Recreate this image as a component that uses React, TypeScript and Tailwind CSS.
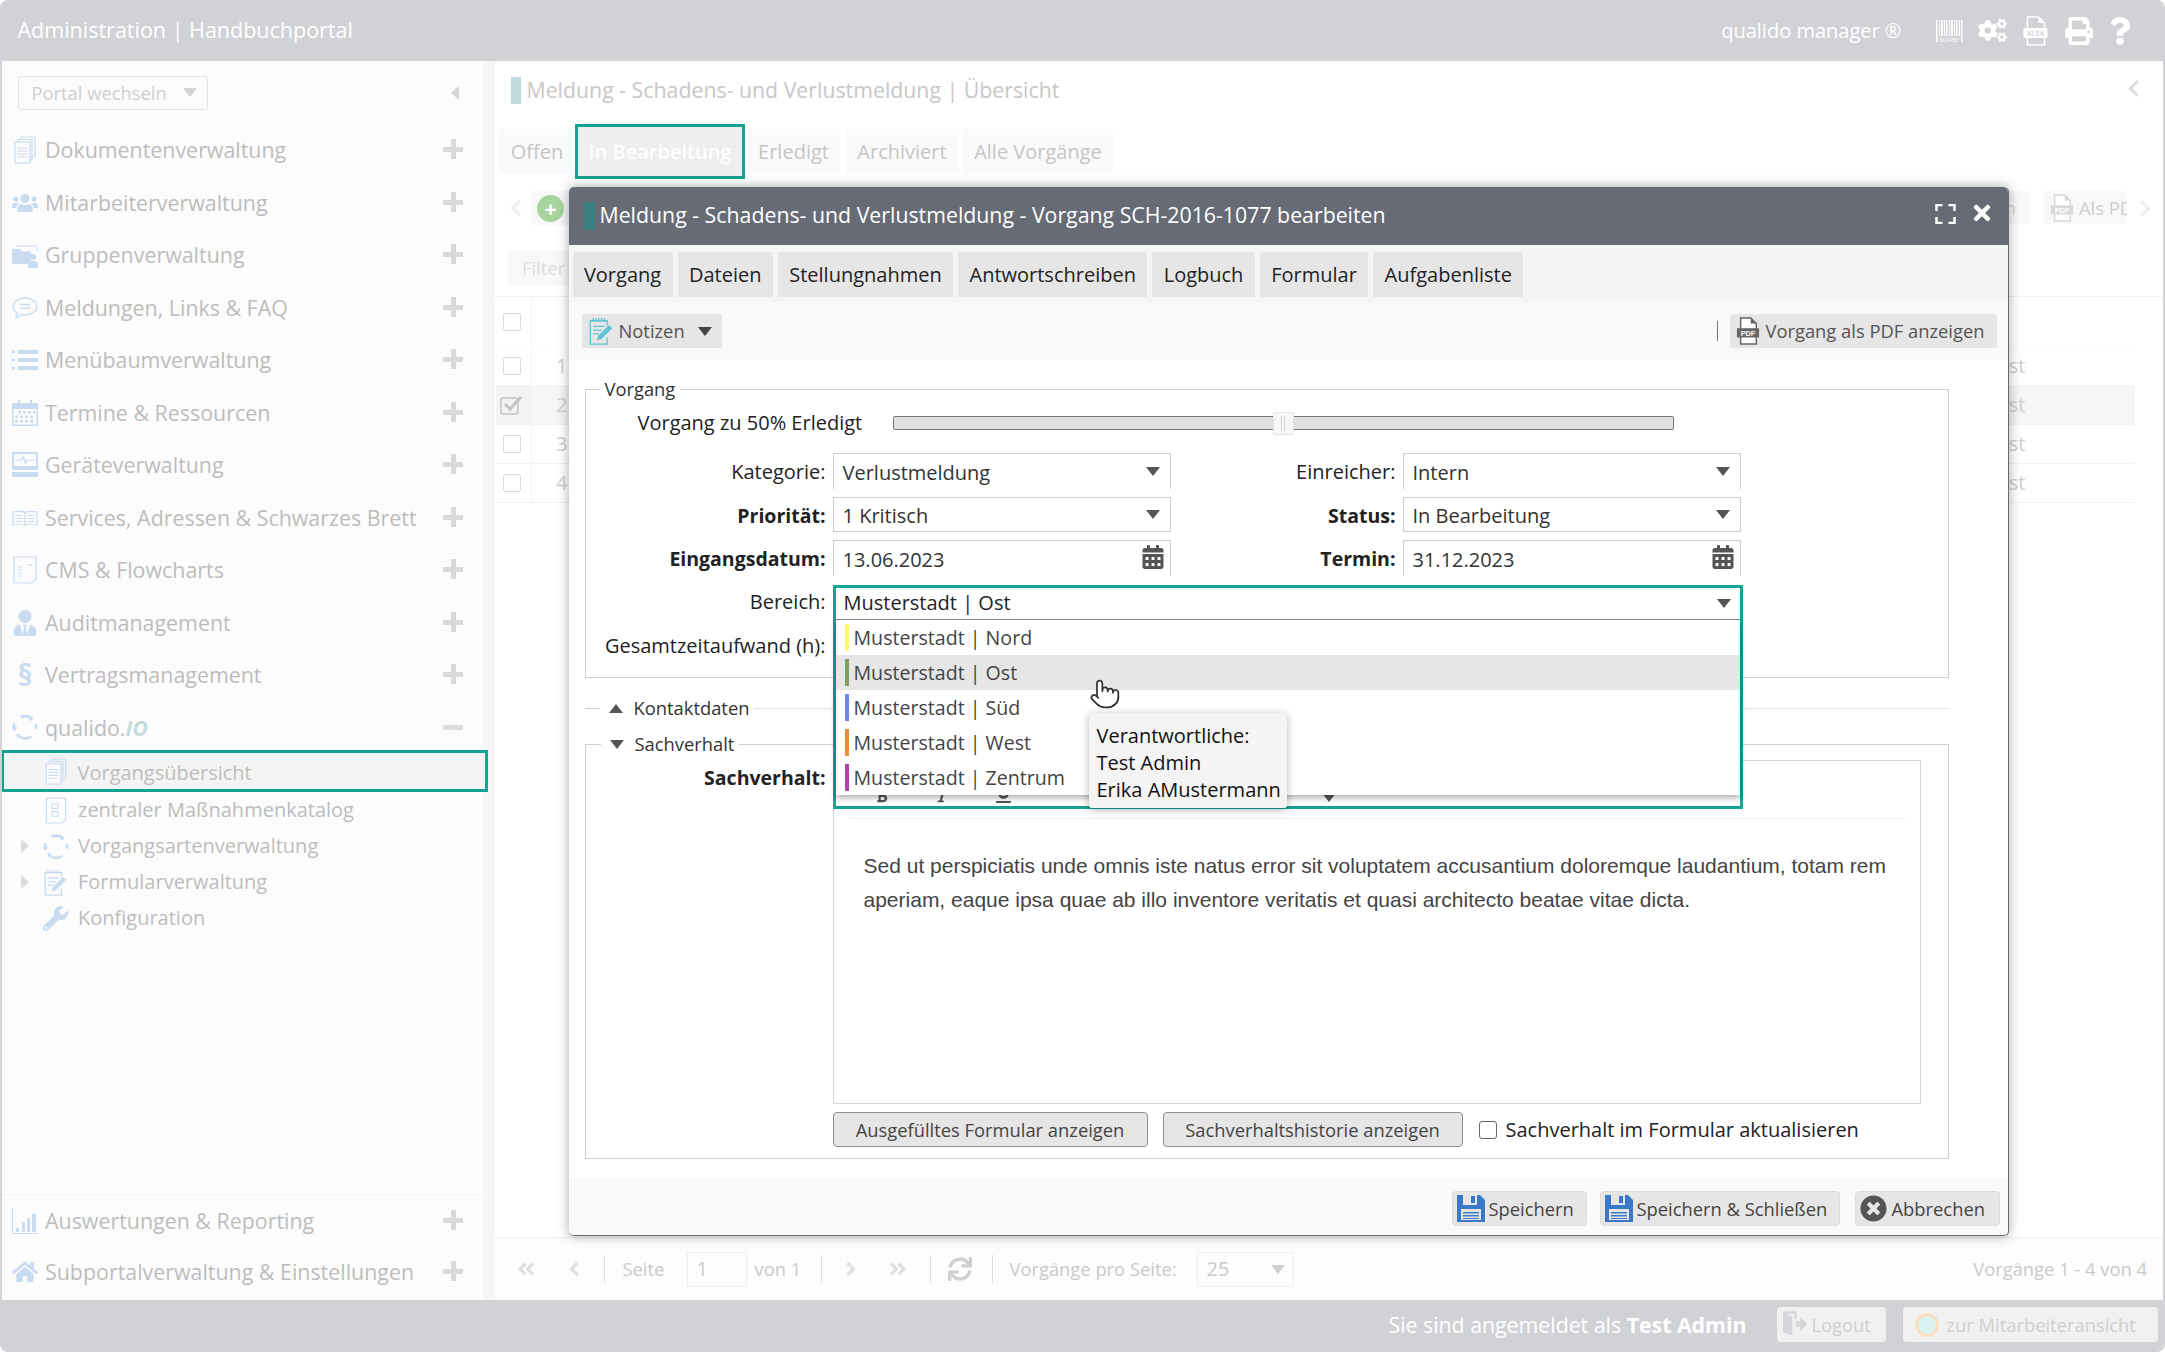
import type { ReactNode } from "react"
import { Pointer } from "lucide-react"
import {
  FaAlignLeft,
  FaAngleDoubleLeft,
  FaAngleDoubleRight,
  FaAngleLeft,
  FaAngleRight,
  FaBold,
  FaCalendarAlt,
  FaChevronLeft,
  FaChevronRight,
  FaCogs,
  FaHome,
  FaItalic,
  FaPrint,
  FaQuestion,
  FaSync,
  FaTimes,
  FaTimesCircle,
  FaUnderline,
  FaUsers,
  FaUserTie,
  FaWrench
} from "react-icons/fa"

const blue = "#c9dbf0"

function TriDown({ c = "border-t-[#555]" }: { c?: string }) {
  return <span className={`block h-0 w-0 flex-none border-x-[7px] border-t-[9px] border-x-transparent ${c}`} />
}

function DocsIcon({ c = blue }: { c?: string }) {
  return (
    <svg viewBox="0 0 22 28" className="h-full w-full" fill="none" stroke={c} strokeWidth="1.2">
      <path d="M7 3V1h14v20h-2" />
      <path d="M4 6V3.500h14V24h-2" />
      <rect x="1" y="6" width="15" height="21" fill="#fdfdfd" />
      <path d="M3.500 12h10M3.500 15h10M3.500 18h10M3.500 21h10" />
    </svg>
  )
}

function FolderIcon() {
  return (
    <svg viewBox="0 0 26 26" className="h-full w-full" fill={blue}>
      <path d="M0 7h8l2 2.500h9V22H0z" />
      <path d="M4 4h21v5" fill="none" stroke={blue} strokeWidth="1" />
      <circle cx="21" cy="15" r="3" />
      <path d="M16 26v-4q0-3 5-3t5 3v4z" />
    </svg>
  )
}

function ChatIcon() {
  return (
    <svg viewBox="0 0 26 24" className="h-full w-full" fill="none" stroke={blue} strokeWidth="1.3">
      <path d="M13 2c6.600 0 12 3.600 12 8.500S19.600 19 13 19c-1.300 0-2.500-.1-3.600-.4L4 22l1.300-5C2.700 15.500 1 13.200 1 10.500 1 5.600 6.400 2 13 2z" />
      <path d="M8 8.500h10M8 12h10" />
    </svg>
  )
}

function ListIcon() {
  return (
    <svg viewBox="0 0 26 22" className="h-full w-full" fill={blue}>
      <path d="M0 1l4 2-4 2zM0 9l4 2-4 2zM0 17l4 2-4 2z" />
      <path d="M6 1h20v4H6zM6 9h20v4H6zM6 17h20v4H6z" />
    </svg>
  )
}

function CalIcon() {
  return (
    <svg viewBox="0 0 26 26" className="h-full w-full" fill={blue}>
      <path d="M0 3h26v23H0zm1.500 6v15.500h23V9z" fillRule="evenodd" />
      <path d="M6 0h2v6H6zM18 0h2v6h-2z" />
      <path d="M6 11h3v2.500H6zM11 11h3v2.500h-3zM16 11h3v2.500h-3zM21 11h2.500v2.500H21zM3 15.500h3V18H3zM8 15.500h3V18H8zM13 15.500h3V18h-3zM18 15.500h3V18h-3zM3 20h3v2.500H3zM8 20h3v2.500H8zM13 20h3v2.500h-3zM18 20h3v2.500h-3z" />
    </svg>
  )
}

function DeviceIcon() {
  return (
    <svg viewBox="0 0 26 26" className="h-full w-full" fill={blue}>
      <path d="M0 0h26v18H0zm2 2v12h22V2z" fillRule="evenodd" />
      <path d="M3 8h7l1.500-3.500 2 7 1.500-3.500h8" fill="none" stroke={blue} strokeWidth="1.200" />
      <path d="M0 20h26v5H0z" />
    </svg>
  )
}

function BookIcon() {
  return (
    <svg viewBox="0 0 26 16" className="h-full w-full" fill="none" stroke={blue} strokeWidth="1.200">
      <path d="M13 2.500C10 1 4 1 1 2v13c3-1 9-1 12 0 3-1 9-1 12 0V2c-3-1-9-1-12 .5zM13 2.500V15" />
      <path d="M3.500 5.500h7M3.500 8.500h7M3.500 11.500h7M15.500 5.500h7M15.500 8.500h7M15.500 11.500h7" />
    </svg>
  )
}

function CmsIcon() {
  return (
    <svg viewBox="0 0 24 28" className="h-full w-full" fill="none" stroke={blue} strokeWidth="1.200">
      <path d="M1 1h22v22l-4 4H1z" />
      <path d="M5 11h4M5 14h4M5 17h3M5 20h3M14 9h5" />
    </svg>
  )
}

function CycleIcon({ c = blue }: { c?: string }) {
  return (
    <svg viewBox="0 0 24 24" className="h-full w-full" fill="none" stroke={c} strokeWidth="2.400">
      <path d="M8 3A10 10 0 0 1 18 4" />
      <path d="M22 9.500a10 10 0 0 1 0 4.500" />
      <path d="M18 20.500a10 10 0 0 1-11 .5" />
      <path d="M2.200 15a10 10 0 0 1 0-6" />
      <path d="M16 1.500l4 2.500-3 3zM5 22.500l-1-4 4 0zM0 12h5l-2.500 3.500z" fill={c} stroke="none" />
    </svg>
  )
}

function ChartIcon() {
  return (
    <svg viewBox="0 0 26 26" className="h-full w-full" fill={blue}>
      <path d="M0 0h1v25h26v1H0z" />
      <path d="M4 20h3v4H4zM10 14h3v10h-3zM15 10h3v14h-3zM20 6h4v18h-4z" />
    </svg>
  )
}

function ChecklistIcon() {
  return (
    <svg viewBox="0 0 22 28" className="h-full w-full" fill="none" stroke={blue} strokeWidth="1.200">
      <path d="M1 1h20v22l-4 4H1z" />
      <path d="M7 7h6v5H7zM7 15h6v5H7z" />
    </svg>
  )
}

function NoteIcon({ c = blue }: { c?: string }) {
  return (
    <svg viewBox="0 0 28 30" className="h-full w-full" fill="none" stroke={c} strokeWidth="1.400">
      <path d="M20 9V4H2v25h18v-7" />
      <path d="M5 1v4M8 1v4M11 1v4M14 1v4M17 1v4" />
      <path d="M5 10h12M5 14h9M5 18h6" />
      <path d="M9 25l1.500-5L22 8.500l3.500 3.500L14 23.500z" fill={c} stroke="none" />
    </svg>
  )
}

function FileIcon({ c = "#666", label = "PDF", ink = "#fff", page = "#fff" }: { c?: string; label?: string; ink?: string; page?: string }) {
  return (
    <svg viewBox="0 0 26 30" className="h-full w-full">
      <path d="M5 1h11l6 6v22H5z" fill={page} stroke={c} strokeWidth="1.600" />
      <path d="M16 1v6h6" fill={c} />
      <rect x="1" y="12" width="24" height="10" fill={c} />
      <text x="13" y="20" fontSize={label.length > 3 ? "6.500" : "8"} fontFamily="Liberation Sans" fontWeight="700" textAnchor="middle" fill={ink}>
        {label}
      </text>
    </svg>
  )
}

function BarcodeIcon() {
  return (
    <svg viewBox="0 0 28 22" className="h-full w-full" fill="#fff">
      <path d="M0 0h1.500v22H0zM3 0h1v16H3zM5 0h2v16H5zM8 0h1v16H8zM10 0h1.500v16H10zM13 0h1v16h-1zM15 0h2v16h-2zM18 0h1v16h-1zM20 0h1.500v16H20zM23 0h1v16h-1zM25 0h1.500v22H25z" />
      <text x="13.500" y="21.500" fontSize="4.500" fontFamily="Liberation Sans" textAnchor="middle">
        01234567
      </text>
    </svg>
  )
}

function SaveIcon() {
  return (
    <svg viewBox="0 0 28 27" className="h-full w-full" fill="#3b78c8">
      <path d="M0 0h6v10h14V0h3l5 5v22H0zM4 14v11h20V14z" fillRule="evenodd" />
      <path d="M14 1h4v7h-4zM6 17h16v1.500H6zM6 20h16v1.500H6zM6 23h16v1H6z" />
    </svg>
  )
}

function ExpandIcon() {
  return (
    <svg viewBox="0 0 20 20" className="h-full w-full" fill="none" stroke="#fff" strokeWidth="2.500">
      <path d="M1 7V1h6M13 1h6v6M19 13v6h-6M7 19H1v-6" />
    </svg>
  )
}

function DoorIcon() {
  return (
    <svg viewBox="0 0 26 30" className="h-full w-full" fill="#d5d6d9">
      <path d="M0 0h15v8h-3V3H4l6 3v20l-10-3z" />
      <path d="M14 11h5V6l7 8-7 8v-5h-5z" />
    </svg>
  )
}

function CheckMark() {
  return (
    <svg viewBox="0 0 24 20" className="h-[20px] w-[24px]" fill="none" stroke="#c4c4c4">
      <rect x="1" y="3" width="17" height="16" rx="2.500" strokeWidth="1.500" />
      <path d="M5 9l5 5L21 2" strokeWidth="3" />
    </svg>
  )
}

function MenuRow({ icon, label }: { icon: ReactNode; label: ReactNode }) {
  return (
    <div className="flex h-[52.500px] items-center pr-[20px] pl-[10px]">
      <span className="flex h-[28px] w-[26px] items-center justify-center text-[#c9dbf0]">{icon}</span>
      <span className="ml-[7px] flex-1 text-[21.400px] whitespace-nowrap text-[#bdbcbc]">{label}</span>
      <span className="relative -top-[1px] block h-[20px] w-[20px]">
        <span className="absolute top-[8px] left-0 h-[5px] w-[20px] bg-[#d9d9d9]" />
        <span className="absolute top-0 left-[8px] h-[20px] w-[5px] bg-[#d9d9d9]" />
      </span>
    </div>
  )
}

function SubRow({ icon, label, arrow }: { icon: ReactNode; label: string; arrow?: boolean }) {
  return (
    <div className="flex h-[36px] items-center pl-[18.500px]">
      <span className="flex w-[22px]">
        {arrow && <span className="block h-0 w-0 border-y-[7px] border-l-[8px] border-y-transparent border-l-[#dcdcdc]" />}
      </span>
      <span className="flex h-[27px] w-[26px] items-center justify-center text-[#c9dbf0]">{icon}</span>
      <span className="ml-[9.500px] text-[20px] text-[#bdbcbc]">{label}</span>
    </div>
  )
}

function Select({ value, bottom = true }: { value: string; bottom?: boolean }) {
  return (
    <div className={`flex items-center justify-between border-x border-t border-[#cfcfcf] pr-[10px] pl-[9px] ${bottom ? "h-[35px] border-b" : "h-[36px]"}`}>
      <span className="pt-[2px] text-[20px] text-[#333]">{value}</span>
      <TriDown />
    </div>
  )
}

function DateField({ value }: { value: string }) {
  return (
    <div className="flex h-[36px] items-center justify-between border-x border-t border-[#cfcfcf] pr-[5px] pl-[9px]">
      <span className="pt-[2px] text-[20px] text-[#333]">{value}</span>
      <FaCalendarAlt size={24} className="-mt-[3px] text-[#555]" />
    </div>
  )
}

function Label({ children, w, bold }: { children: ReactNode; w?: string; bold?: boolean }) {
  return <div className={`pr-[7px] text-right whitespace-nowrap text-[#222] ${w ?? ""} ${bold ? "text-[19.500px] font-bold" : "text-[20px]"}`}>{children}</div>
}

function BgBtn({ children, cls }: { children: ReactNode; cls: string }) {
  return <div className={`flex h-[45px] items-center justify-center bg-[#fafafa] text-[20px] text-[#c5c5c5] ${cls}`}>{children}</div>
}

function TableRow({ n, on }: { n: number; on?: boolean }) {
  return (
    <div className={`flex h-[39px] items-center border-b border-[#f3f3f3] ${on ? "bg-[#f6f6f6]" : ""}`}>
      <div className={`flex h-full w-[36px] items-center justify-center border-r border-[#f3f3f3] pr-[3px] ${on ? "bg-[#f3f3f3]" : ""}`}>
        {on ? <CheckMark /> : <span className="h-[18px] w-[18px] rounded-[3px] border border-[#d8d8d8]" />}
      </div>
      <span className="ml-[24px] flex-1 text-[20px] text-[#cfcfcf]">{n}</span>
      <span className="mr-[109px] text-[20px] text-[#cfcfcf]">Ost</span>
    </div>
  )
}

function FootBtn({ icon, label, cls }: { icon: ReactNode; label: string; cls: string }) {
  return (
    <div className={`flex h-[35px] items-center rounded-[4px] border border-[#dcdcdc] bg-[#e6e6e6] pl-[4px] ${cls}`}>
      <span className="flex h-[27px] w-[28px] items-center justify-center">{icon}</span>
      <span className="ml-[4px] text-[18.350px] text-[#444]">{label}</span>
    </div>
  )
}

function Sep() {
  return <span className="block h-[28px] w-px flex-none bg-[#dddddd]" />
}

const areas = [
  { name: "Nord", color: "bg-[#fbf77a]" },
  { name: "Ost", color: "bg-[#7f9f5f]", on: true },
  { name: "Süd", color: "bg-[#6d86f2]" },
  { name: "West", color: "bg-[#ef8a35]" },
  { name: "Zentrum", color: "bg-[#b43fae]" }
]

function Modal() {
  return (
    <div className="absolute top-[187px] left-[566.500px] z-10 flex h-[1049px] w-[1440px] flex-col rounded-[5px] border-r border-b border-[#666b75] bg-white shadow-[0_0_12px_rgba(0,0,0,0.35)]">
      <div className="flex h-[58px] items-center rounded-t-[5px] bg-[#666b75] pl-[15px]">
        <span className="h-[28px] w-[11px] bg-[#3b7f7e]" />
        <span className="ml-[5px] -mt-[3px] flex-1 text-[21.300px] text-white">Meldung - Schadens- und Verlustmeldung - Vorgang SCH-2016-1077 bearbeiten</span>
        <span className="-mt-[5px] h-[20px] w-[21px]"><ExpandIcon /></span>
        <FaTimes size={24} className="mr-[14px] ml-[14px] -mt-[6px] text-white" />
      </div>
      <div className="flex h-[57px] gap-[5px] bg-[#f5f5f5] pt-[7px] pl-[4px]">
        {["Vorgang", "Dateien", "Stellungnahmen", "Antwortschreiben", "Logbuch", "Formular", "Aufgabenliste"].map((t) => (
          <div key={t} className="flex h-[45px] items-center rounded-t-[3px] bg-[#e6e6e6] px-[11.400px] text-[20px] text-[#222]">{t}</div>
        ))}
      </div>
      <div className="flex h-[58px] items-start bg-[#f9f9f9] pt-[12px] pr-[11px] pl-[13px]">
        <div className="flex h-[34px] w-[140px] items-center rounded-t-[3px] border border-[#e0e0e0] bg-[#e6e6e6] pl-[5px]">
          <span className="h-[28px] w-[27px]"><NoteIcon c="#5cc4d3" /></span>
          <span className="ml-[4px] text-[18.350px] text-[#555]">Notizen</span>
          <span className="ml-[13px]"><TriDown c="border-t-[#444]" /></span>
        </div>
        <div className="flex-1" />
        <span className="mt-[7px] h-[20px] w-px bg-[#777]" />
        <div className="ml-[12px] flex h-[34px] w-[267px] items-center rounded-t-[3px] bg-[#e6e6e6] pl-[6px]">
          <span className="h-[28px] w-[24px]"><FileIcon /></span>
          <span className="ml-[6px] text-[18.350px] text-[#555]">Vorgang als PDF anzeigen</span>
        </div>
      </div>

      <div className="relative flex-1 px-[16px] pt-[29px]">
        {/* Vorgang fieldset */}
        <div className="h-[289px] w-[1364px] border border-[#cfcfcf]">
          <div className="-mt-[15px] ml-[14px] w-fit bg-white px-[5px] text-[18.350px] leading-[28px] text-[#333]">Vorgang</div>
          <div className="mt-[7px] flex h-[26px] items-center">
            <span className="ml-[52px] w-[255px] text-[20px] text-[#222]">Vorgang zu 50% Erledigt</span>
            <div className="relative h-[14px] w-[781px] rounded-[2px] border border-[#777] bg-[#e0e0e0]">
              <span className="absolute -top-[5px] left-[379px] flex h-[23px] w-[21px] justify-center gap-[2px] rounded-[2px] border border-[#e4e4e4] bg-[#f7f7f7] pt-[3px] pb-[3px]">
                <i className="block w-px bg-[#d0d0d0]" />
                <i className="block w-px bg-[#d0d0d0]" />
              </span>
            </div>
          </div>
          <div className="mt-[17px] grid grid-cols-[247px_338px_232px_338px] items-center">
            <div className="pt-[2px]"><Label>Kategorie:</Label></div>
            <Select value="Verlustmeldung" bottom={false} />
            <div className="pt-[2px]"><Label>Einreicher:</Label></div>
            <Select value="Intern" bottom={false} />
          </div>
          <div className="mt-[8px] grid grid-cols-[247px_338px_232px_338px] items-center">
            <div className="pt-[2px]"><Label bold>Priorität:</Label></div>
            <Select value="1 Kritisch" />
            <div className="pt-[2px]"><Label bold>Status:</Label></div>
            <Select value="In Bearbeitung" />
          </div>
          <div className="mt-[8px] grid grid-cols-[247px_338px_232px_338px] items-center">
            <div className="pt-[2px]"><Label bold>Eingangsdatum:</Label></div>
            <DateField value="13.06.2023" />
            <div className="pt-[2px]"><Label bold>Termin:</Label></div>
            <DateField value="31.12.2023" />
          </div>
          <div className="mt-[9px] flex h-[36px] items-center pb-[2px]">
            <Label w="w-[247px]">Bereich:</Label>
          </div>
          <div className="mt-[7px] flex h-[36px] items-center">
            <Label w="w-[247px]">Gesamtzeitaufwand (h):</Label>
          </div>
        </div>

        {/* collapsible sections */}
        <div className="mt-[17px] flex h-[26px] w-[1364px] items-center">
          <span className="h-px w-[15px] bg-[#cfcfcf]" />
          <span className="ml-[9px] block h-0 w-0 border-x-[7px] border-b-[9px] border-x-transparent border-b-[#555]" />
          <span className="ml-[11px] text-[18.350px] text-[#333]">Kontaktdaten</span>
          <span className="ml-[5px] h-px flex-1 bg-[#e0e0e0]" />
        </div>
        <div className="relative mt-[23px] h-[415px] w-[1364px] border-x border-b border-[#cfcfcf]">
          <div className="absolute -top-[13px] left-0 flex h-[26px] w-full items-center">
            <span className="h-px w-[15px] bg-[#cfcfcf]" />
            <span className="ml-[9px]"><TriDown /></span>
            <span className="ml-[11px] text-[18.350px] text-[#333]">Sachverhalt</span>
            <span className="ml-[5px] h-px flex-1 bg-[#cfcfcf]" />
          </div>
          <div className="flex h-full pt-[16px]">
            <div className="pt-[3px]">
              <Label w="w-[247px]" bold>Sachverhalt:</Label>
            </div>
            <div className="flex flex-1 flex-col">
              <div className="h-[344px] w-[1088px] border border-[#d5d5d5]">
                <div className="mx-[15px] flex h-[58px] items-end border-b border-[#eeeeee] pb-[15px] pl-[26px] text-[#555]">
                  <FaBold size={14} />
                  <FaItalic size={14} className="ml-[46px]" />
                  <FaUnderline size={17} className="ml-[46px]" />
                  <FaAlignLeft size={14} className="ml-[76px]" />
                  <span className="mb-[1px] ml-[220px]"><TriDown /></span>
                </div>
                <p className="mt-[30px] pr-[20px] pl-[30px] font-['Liberation_Sans',sans-serif] text-[21px] leading-[34px] text-[#444]">
                  Sed ut perspiciatis unde omnis iste natus error sit voluptatem accusantium doloremque laudantium, totam rem aperiam, eaque ipsa quae ab illo inventore veritatis et quasi architecto beatae vitae dicta.
                </p>
              </div>
              <div className="mt-[8px] flex h-[35px] items-center">
                <div className="flex h-full w-[315px] items-center justify-center rounded-[4px] border border-[#8e8e8e] bg-[#e6e6e6] text-[18.350px] text-[#444]">Ausgefülltes Formular anzeigen</div>
                <div className="ml-[15px] flex h-full w-[300px] items-center justify-center rounded-[4px] border border-[#8e8e8e] bg-[#e6e6e6] text-[18.350px] text-[#444]">Sachverhaltshistorie anzeigen</div>
                <span className="ml-[16px] h-[18px] w-[18px] rounded-[3px] border border-[#666]" />
                <span className="ml-[9px] text-[20px] text-[#222]">Sachverhalt im Formular aktualisieren</span>
              </div>
            </div>
          </div>
        </div>

        {/* open Bereich dropdown */}
        <div className="absolute top-[225px] left-[264px] z-20 h-[224px] w-[910px] border-[3px] border-[#14a292]">
          <div className="flex h-[32px] items-center justify-between border-b border-[#8a8a8a] bg-white pr-[9px] pl-[8px]">
            <span className="pb-[2px] text-[20px] text-[#222]">Musterstadt | Ost</span>
            <TriDown />
          </div>
          <div className="bg-white shadow-[0_3px_6px_rgba(0,0,0,0.3)]">
            {areas.map((a) => (
              <div key={a.name} className={`flex h-[35px] items-center pl-[9px] ${a.on ? "bg-[#e6e6e6]" : ""}`}>
                <span className={`h-[27px] w-[4px] ${a.color}`} />
                <span className="ml-[5px] text-[19.600px] text-[#444]">Musterstadt | {a.name}</span>
              </div>
            ))}
          </div>
        </div>
        <Pointer size={32} strokeWidth={1.3} className="absolute top-[318px] left-[520px] z-30 fill-white text-[#333]" />
        <div className="absolute top-[353px] left-[520px] z-30 h-[95px] w-[198px] rounded-[3px] bg-[#f4f4f4] pt-[9px] pl-[8px] text-[20px] leading-[27px] text-[#111] shadow-[0_2px_8px_rgba(0,0,0,0.3)]">
          <div>Verantwortliche:</div>
          <div>Test Admin</div>
          <div className="whitespace-nowrap">Erika AMustermann</div>
        </div>
      </div>

      <div className="flex h-[57px] items-start justify-end gap-[13px] rounded-b-[5px] bg-[#f9f9f9] pt-[13px] pr-[8px]">
        <FootBtn cls="w-[135px]" icon={<SaveIcon />} label="Speichern" />
        <FootBtn cls="w-[240px]" icon={<SaveIcon />} label="Speichern & Schließen" />
        <FootBtn cls="ml-[2px] w-[145px]" icon={<FaTimesCircle size={27} className="text-[#555]" />} label="Abbrechen" />
      </div>
    </div>
  )
}

export default function App() {
  return (
    <div className="relative flex h-[1352px] w-[2165px] flex-col overflow-hidden rounded-[8px] border-x-[2.500px] border-b-[3px] border-[#d1d2d6] bg-white font-['Open_Sans',sans-serif]">
      {/* top bar */}
      <header className="flex h-[61px] flex-none items-center bg-[#d1d2d6] pr-[29px] pl-[15.500px] text-white">
        <span className="flex-1 text-[21.500px]">Administration | Handbuchportal</span>
        <span className="text-[20px]">qualido manager ®</span>
        <span className="ml-[34.500px] h-[22px] w-[28px]"><BarcodeIcon /></span>
        <FaCogs size={29} className="ml-[13.500px]" />
        <span className="ml-[15px] h-[30px] w-[27px]"><FileIcon c="#fff" label="XLSX" ink="#d1d2d6" page="none" /></span>
        <FaPrint size={28} className="ml-[16.500px]" />
        <FaQuestion size={28} className="ml-[13px]" />
      </header>

      <div className="flex min-h-0 flex-1">
        {/* sidebar */}
        <aside className="flex w-[481px] flex-none flex-col bg-[#fcfcfc]">
          <div className="flex h-[63px] flex-none items-center justify-between pr-[24px] pl-[15.500px]">
            <div className="flex h-[34px] w-[190px] items-center justify-between rounded-[3px] border border-[#e2e2e2] bg-[#fbfbfb] pr-[10px] pl-[13px] text-[18.350px] text-[#cfcfcf]">
              Portal wechseln
              <TriDown c="border-t-[#d5d5d5]" />
            </div>
            <span className="block h-0 w-0 border-y-[7px] border-r-[8px] border-y-transparent border-r-[#d5d5d5]" />
          </div>
          <MenuRow icon={<span className="h-[28px] w-[22px]"><DocsIcon /></span>} label="Dokumentenverwaltung" />
          <MenuRow icon={<FaUsers size={28} />} label="Mitarbeiterverwaltung" />
          <MenuRow icon={<FolderIcon />} label="Gruppenverwaltung" />
          <MenuRow icon={<ChatIcon />} label="Meldungen, Links & FAQ" />
          <MenuRow icon={<ListIcon />} label="Menübaumverwaltung" />
          <MenuRow icon={<CalIcon />} label="Termine & Ressourcen" />
          <MenuRow icon={<DeviceIcon />} label="Geräteverwaltung" />
          <MenuRow icon={<BookIcon />} label="Services, Adressen & Schwarzes Brett" />
          <MenuRow icon={<CmsIcon />} label="CMS & Flowcharts" />
          <MenuRow icon={<FaUserTie size={26} />} label="Auditmanagement" />
          <MenuRow icon={<span className="text-[30px] leading-none font-bold">§</span>} label="Vertragsmanagement" />
          <div className="flex h-[48.500px] flex-none items-start pt-[12px] pr-[20px] pl-[10px]">
            <span className="h-[26px] w-[26px]"><CycleIcon /></span>
            <span className="ml-[7px] flex-1 text-[21.400px] leading-[28px] text-[#bdbcbc]">qualido.<i className="font-bold text-[#c3dcd9]">IO</i></span>
            <span className="mt-[11px] h-[5px] w-[20px] bg-[#dcdcdc]" />
          </div>
          <div className="relative z-[1] -mr-[5px] -ml-[1.500px] flex h-[42px] flex-none items-center border-[3px] border-[#14a292] bg-[#f4f4f4] pt-[3px] pl-[41px]">
            <span className="-mt-[2px] h-[27px] w-[22px]"><DocsIcon /></span>
            <span className="ml-[11px] text-[20px] text-[#bdbcbc]">Vorgangsübersicht</span>
          </div>
          <SubRow icon={<ChecklistIcon />} label="zentraler Maßnahmenkatalog" />
          <SubRow arrow icon={<CycleIcon />} label="Vorgangsartenverwaltung" />
          <SubRow arrow icon={<NoteIcon />} label="Formularverwaltung" />
          <SubRow icon={<FaWrench size={25} />} label="Konfiguration" />
          <div className="flex-1" />
          <div className="border-t border-[#f3f3f3]">
            <MenuRow icon={<ChartIcon />} label="Auswertungen & Reporting" />
            <div className="-mt-[1.500px] pb-[1.500px]">
              <MenuRow icon={<FaHome size={28} />} label="Subportalverwaltung & Einstellungen" />
            </div>
          </div>
        </aside>
        <div className="w-[12px] flex-none bg-[#f6f6f6]" />

        {/* page behind the dialog */}
        <main className="flex min-w-0 flex-1 flex-col">
          <div className="flex h-[60px] flex-none items-center pr-[20px] pl-[15.500px]">
            <span className="-mt-[2px] h-[27px] w-[10px] bg-[#c2dbdb]" />
            <span className="ml-[6px] -mt-[2px] flex-1 text-[21.300px] text-[#c7c7c7]">Meldung - Schadens- und Verlustmeldung | Übersicht</span>
            <FaChevronLeft size={19} className="-mt-[5px] text-[#dcdcdc]" />
          </div>
          <div className="flex h-[63px] flex-none items-start gap-[4px] pt-[8px] pl-[4px]">
            <BgBtn cls="w-[72px] pl-[4px]">Offen</BgBtn>
            <div className="-mt-[5px] flex h-[55px] w-[170px] items-center justify-center border-[3px] border-[#14a292] bg-[#eeeeee] text-[20px] font-semibold text-white">In Bearbeitung</div>
            <BgBtn cls="w-[92px] pr-[3px]">Erledigt</BgBtn>
            <BgBtn cls="w-[114px]">Archiviert</BgBtn>
            <BgBtn cls="w-[150px]">Alle Vorgänge</BgBtn>
          </div>
          <div className="flex h-[113px] flex-none flex-col border-b border-[#f1f1f1] pt-[7px]">
            <div className="flex h-[34px] items-start pl-[11px]">
              <FaChevronLeft size={20} className="mt-[7px] text-[#efefef]" />
              <div className="ml-[5px] flex h-[34px] w-[40px] items-center rounded-[3px] bg-[#f8f8f8] pl-[6px]">
                <span className="flex h-[27px] w-[27px] items-center justify-center rounded-full bg-[#a6d39e] text-[22px] leading-none font-bold text-white">+</span>
              </div>
              <div className="flex-1" />
              <div className="flex h-[33px] w-[40px] items-center justify-end rounded-[3px] bg-[#f8f8f8] pr-[14px]">
                <span className="text-[18.350px] text-[#d5d5d5]">n</span>
              </div>
              <div className="ml-[14px] flex h-[33px] w-[83px] items-center overflow-hidden rounded-[3px] bg-[#f8f8f8] pl-[6px] whitespace-nowrap">
                <span className="h-[28px] w-[24px] flex-none"><FileIcon c="#d8d8d8" /></span>
                <span className="ml-[5px] text-[18.350px] text-[#cfcfcf]">Als PDF</span>
              </div>
              <FaChevronRight size={19} className="mt-[8px] mr-[8px] ml-[9px] text-[#efefef]" />
            </div>
            <div className="mt-[26px] ml-[13px] flex h-[34px] w-[90px] items-center rounded-[3px] bg-[#f8f8f8] pl-[14px] text-[18.350px] text-[#dcdcdc]">Filter</div>
          </div>
          <div className="flex-1 pr-[28.500px] pl-[1px]">
            <div className="flex h-[50px] border-b border-[#fafafa]">
              <div className="flex h-full w-[36px] items-center justify-center border-r border-[#f3f3f3] pr-[3px]">
                <span className="h-[18px] w-[18px] rounded-[3px] border border-[#d8d8d8]" />
              </div>
            </div>
            <TableRow n={1} />
            <TableRow n={2} on />
            <TableRow n={3} />
            <TableRow n={4} />
          </div>
          {/* pagination */}
          <div className="flex h-[63px] flex-none items-center border-t border-[#efefef] bg-[#fdfdfd] pr-[16px] pl-[21.500px] text-[18.350px] text-[#c9c9c9]">
            <FaAngleDoubleLeft size={20} className="w-[18px] text-[#dfdfdf]" />
            <FaAngleLeft size={22} className="ml-[33px] w-[12px] text-[#dfdfdf]" />
            <span className="ml-[24px]"><Sep /></span>
            <span className="ml-[18px] w-[42px]">Seite</span>
            <span className="ml-[22px] flex h-[35px] w-[60px] items-center border border-[#efefef] pl-[9px] text-[20px]">1</span>
            <span className="ml-[8px] w-[45px] whitespace-nowrap">von 1</span>
            <span className="ml-[21px]"><Sep /></span>
            <FaAngleRight size={22} className="ml-[23px] w-[12px] text-[#dfdfdf]" />
            <FaAngleDoubleRight size={20} className="ml-[31px] w-[20px] text-[#dfdfdf]" />
            <span className="ml-[22px]"><Sep /></span>
            <FaSync size={24} className="ml-[17px] text-[#cfcfcf]" />
            <span className="ml-[20px]"><Sep /></span>
            <span className="ml-[17px] w-[166px] whitespace-nowrap">Vorgänge pro Seite:</span>
            <span className="ml-[21px] flex h-[35px] w-[97px] items-center justify-between border border-[#efefef] pr-[8px] pl-[9px] text-[20px]">
              25
              <TriDown c="border-t-[#d0d0d0]" />
            </span>
            <span className="flex-1" />
            <span>Vorgänge 1 - 4 von 4</span>
          </div>
        </main>
      </div>

      {/* bottom bar */}
      <footer className="flex h-[49px] flex-none items-center justify-end bg-[#d1d2d6] pr-[5.500px] text-white">
        <span className="text-[21.300px]">Sie sind angemeldet als <b className="font-bold">Test Admin</b></span>
        <div className="ml-[30px] flex h-[35px] w-[109px] items-center rounded-[4px] bg-[#f1f1f2] pl-[6px]">
          <span className="h-[28px] w-[24px]"><DoorIcon /></span>
          <span className="ml-[5px] text-[18.350px] text-[#cfcfcf]">Logout</span>
        </div>
        <div className="ml-[17px] flex h-[35px] w-[255px] items-center rounded-[4px] bg-[#f1f1f2] pl-[12px]">
          <span className="h-[24px] w-[24px] rounded-full border-[3px] border-[#f8dfc0] bg-[#d9f1f1]" />
          <span className="ml-[8px] text-[18.350px] text-[#cfcfcf]">zur Mitarbeiteransicht</span>
        </div>
      </footer>
      <Modal />
    </div>
  )
}
